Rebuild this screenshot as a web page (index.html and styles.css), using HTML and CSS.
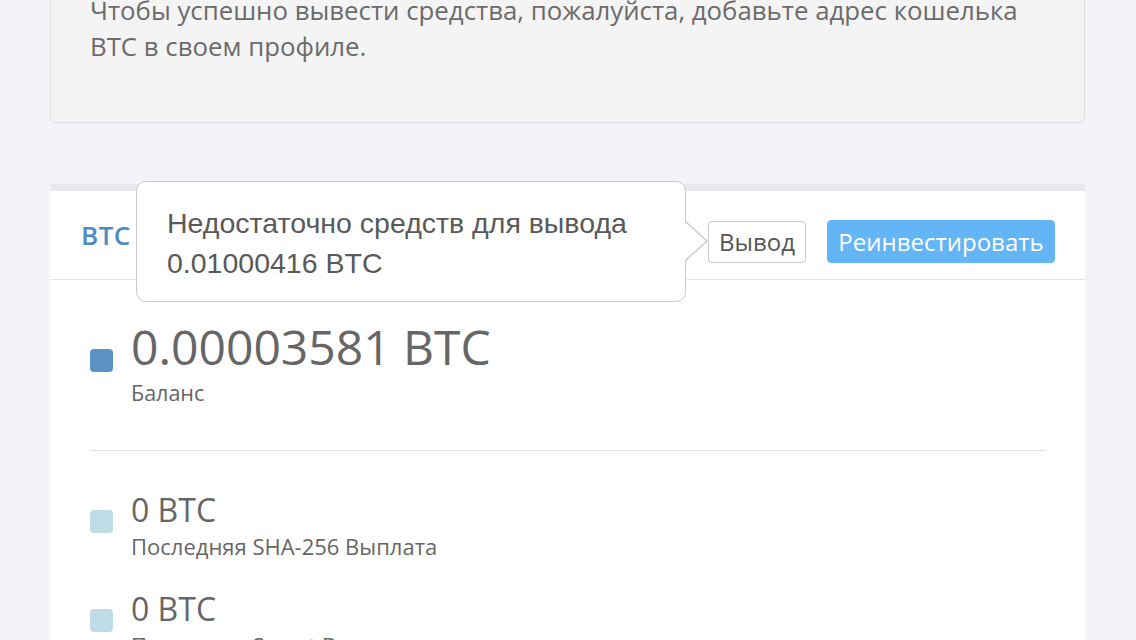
FILE: index.html
```html
<!DOCTYPE html>
<html lang="ru">
<head>
<meta charset="utf-8">
<link rel="stylesheet" href="styles.css">
</head>
<body>
<div class="page">
  <div class="alert">Чтобы успешно вывести средства, пожалуйста, добавьте адрес кошелька BTC в своем профиле.</div>

  <div class="panel">
    <div class="panel-head">
      <div class="coin">BTC</div>
      <div class="actions">
        <button class="btn btn-default">Вывод</button>
        <button class="btn btn-primary">Реинвестировать</button>
      </div>
    </div>
    <div class="tooltip">
      <div class="tooltip-text">Недостаточно средств для вывода<br>0.01000416 BTC</div>
      <svg class="tooltip-arrow" width="24" height="44" viewBox="0 0 24 44">
        <polygon points="0,2 22,22 0,42" fill="#fff"/>
        <polyline points="0,2 22,22 0,42" fill="none" stroke="#c9c9c9" stroke-width="1.3"/>
      </svg>
    </div>
    <div class="panel-body">
      <div class="stat stat-main">
        <span class="dot dot-dark"></span>
        <div class="stat-info">
          <div class="value">0.00003581 BTC</div>
          <div class="label">Баланс</div>
        </div>
      </div>
      <div class="divider"></div>
      <div class="stat">
        <span class="dot dot-light"></span>
        <div class="stat-info">
          <div class="value">0 BTC</div>
          <div class="label">Последняя SHA-256 Выплата</div>
        </div>
      </div>
      <div class="stat">
        <span class="dot dot-light"></span>
        <div class="stat-info">
          <div class="value">0 BTC</div>
          <div class="label">Последняя Scrypt Выплата</div>
        </div>
      </div>
    </div>
  </div>
</div>
</body>
</html>
```

FILE: styles.css
```css
html, body {
  margin: 0;
  padding: 0;
  background: #f3f4f8;
  overflow: hidden;
}
body {
  font-family: "Open Sans", "Noto Sans", sans-serif;
  color: #666;
}
.page {
  margin: 0 51px 0 50px;
}
.alert {
  margin-top: -41px;
  background: #f4f4f4;
  border: 1px solid #dedede;
  border-radius: 5px;
  padding: 32px 50px 58px 39px;
  font-size: 25.8px;
  line-height: 36px;
  color: #6b6b6b;
}
.panel {
  position: relative;
  margin-top: 61px;
  background: #fff;
  border-top: 7px solid #e6e8eb;
}
.panel-head {
  height: 89px;
  box-sizing: border-box;
  border-bottom: 1px solid #e5e5e5;
  display: flex;
  align-items: flex-start;
  justify-content: space-between;
  padding: 29px 30px 0 31px;
}
.coin {
  font-size: 26px;
  font-weight: 600;
  letter-spacing: 0.5px;
  line-height: 30px;
  color: #4f89c2;
}
.actions {
  display: flex;
  gap: 21px;
  align-items: flex-start;
}
.btn {
  font-family: "Open Sans", "Noto Sans", sans-serif;
  font-size: 24px;
  height: 42px;
  padding: 0;
  border-radius: 4px;
  line-height: 40px;
  cursor: pointer;
}
.btn-default {
  background: #fff;
  border: 1px solid #c9c9c9;
  color: #555;
  width: 98px;
  margin-top: 1px;
}
.btn-primary {
  background: #64b5f6;
  border: 1px solid #64b5f6;
  color: #fff;
  width: 228px;
  height: 43px;
}
.tooltip {
  position: absolute;
  left: 86px;
  top: -10px;
  width: 550px;
  height: 121px;
  background: #fff;
  border: 1px solid #c9c9c9;
  border-radius: 10px;
  box-sizing: border-box;
  padding: 21px 20px 0 30px;
}
.tooltip-text {
  font-family: "Liberation Sans", Arial, sans-serif;
  font-size: 28.5px;
  line-height: 40px;
  color: #595959;
}
.tooltip-arrow {
  position: absolute;
  right: -24px;
  top: 37px;
}
.panel-body {
  padding: 39px 39px 0 40px;
}
.stat {
  display: flex;
  align-items: flex-start;
}
.dot {
  flex: none;
  width: 23px;
  height: 23px;
  border-radius: 4px;
  margin-right: 18px;
  margin-top: 20px;
}
.stat-main .dot {
  margin-top: 30px;
}
.dot-dark { background: #5b92c6; }
.dot-light { background: #c0dce7; }
.value {
  font-size: 32px;
  line-height: 40px;
  color: #666;
}
.stat-main .value {
  font-size: 48px;
  line-height: 56px;
}
.label {
  font-size: 22px;
  line-height: 32px;
  color: #666;
}
.stat-main .label {
  font-size: 21.5px;
  line-height: 36px;
}
.divider {
  height: 1px;
  background: #e5e5e5;
  margin: 39px 0 39px 0;
}
.stat + .stat {
  margin-top: 27px;
}
```
